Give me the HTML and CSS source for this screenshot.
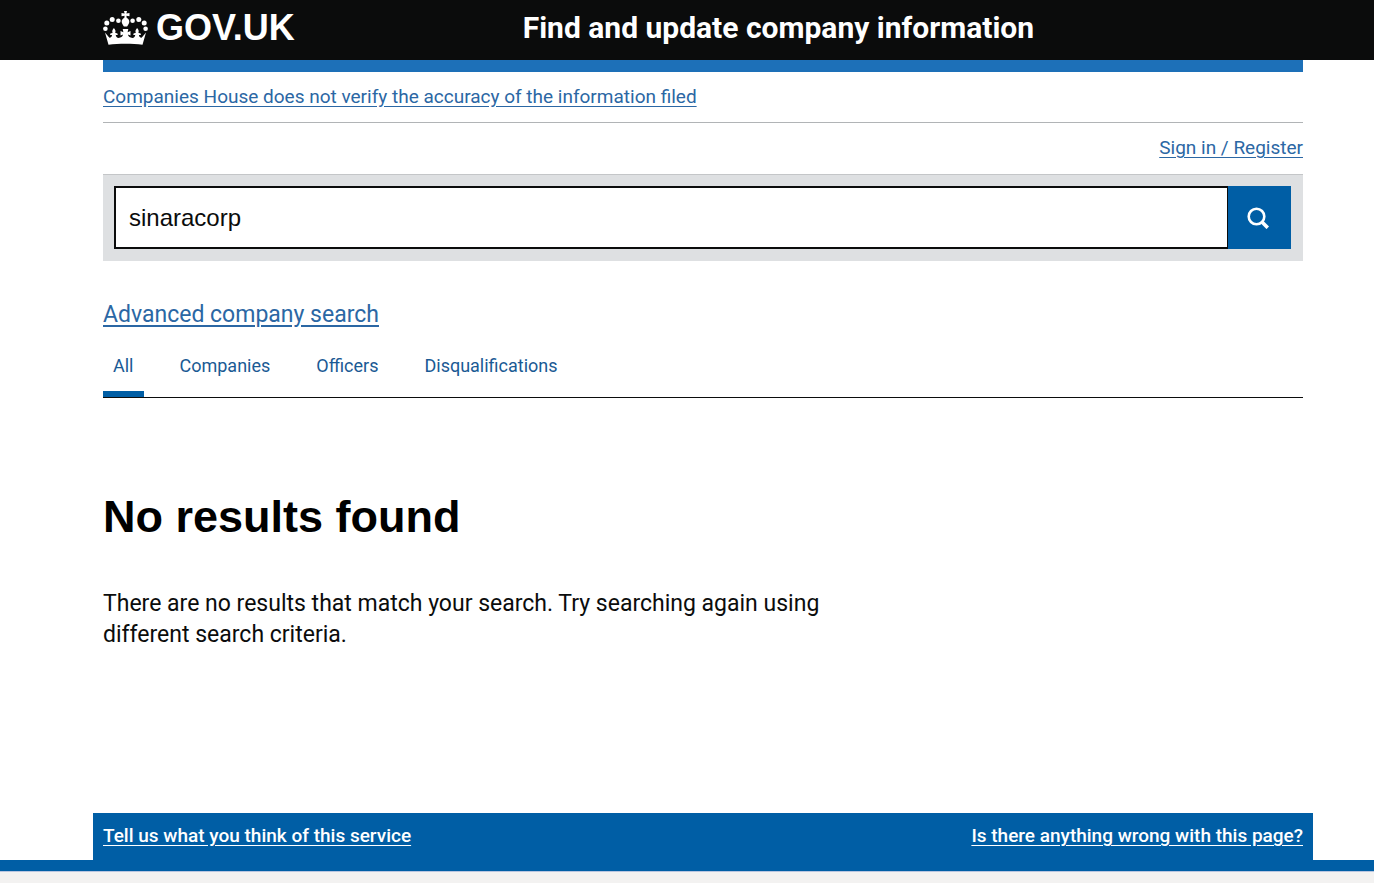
FILE: index.html
```html
<!DOCTYPE html>
<html lang="en">
<head>
    <meta charset="UTF-8">
    <meta name="viewport" content="width=device-width, initial-scale=1.0">
    <title>sinaracorp - Find and update company information - GOV.UK</title>
    <link rel="stylesheet" href="styles.css">
</head>
<body>
    <header class="header">
        <div class="container header-inner">
            <a class="logo" href="#">
                <svg class="crown" viewBox="0 0 45 34" width="45" height="34" fill="#fff" aria-hidden="true">
                    <!-- cross and centre orb -->
                    <path d="M21 0h3l-.6 2.500 3.100-.6v3.400l-3.100-.6.3 2.300c1.700.6 2.600 2 2.600 3.700 0 1.900-1.500 3.200-2.200 4.800h-3.200c-.7-1.600-2.200-2.900-2.200-4.800 0-1.700.9-3.100 2.600-3.700l.3-2.300-3.100.6v-3.400l3.100.6z"/>
                    <!-- jewels -->
                    <circle cx="15.4" cy="9.800" r="2.300"/>
                    <circle cx="9.200" cy="8.600" r="2.500"/>
                    <circle cx="3.800" cy="12" r="2.500"/>
                    <circle cx="2.400" cy="17.700" r="2.300"/>
                    <circle cx="29.600" cy="9.800" r="2.300"/>
                    <circle cx="35.800" cy="8.600" r="2.500"/>
                    <circle cx="41.200" cy="12" r="2.500"/>
                    <circle cx="42.600" cy="17.700" r="2.300"/>
                    <!-- base -->
                    <path d="M2 21.500l4.400 5.300c1.600 0 2.500-1.200 2.700-3-.9.600-1.900.3-2.200-.9.900-.8 1.900-.9 2.700-.8-.8-2-.1-3.600 1.300-5.100 1.400 1.500 2.100 3.100 1.300 5.100.8-.1 1.800 0 2.700.8-.3 1.200-1.300 1.500-2.200.9.200 2 1.200 3.100 2.900 3.100 2.300 0 4-1 4.500-3.300l-2.600 1v-4.600l2.900 1.300-.7-3.300h5.600l-.7 3.300 2.900-1.300v4.600l-2.600-1c.5 2.300 2.200 3.300 4.500 3.300 1.700 0 2.700-1.100 2.900-3.100-.9.600-1.900.3-2.200-.9.900-.8 1.900-.9 2.700-.8-.8-2-.1-3.600 1.300-5.100 1.400 1.500 2.100 3.100 1.300 5.100.8-.1 1.800 0 2.700.8-.3 1.200-1.300 1.500-2.200.9.200 1.800 1.100 3 2.700 3l4.400-5.300-3.500 12.200c-10-1.300-24-1.300-34 0z"/>
                </svg>
                <span class="logo-text">GOV.UK</span>
            </a>
            <a class="service-name" href="#">Find and update company information</a>
        </div>
    </header>

    <main class="container">
        <div class="phase-banner">
            <a class="link" href="#">Companies House does not verify the accuracy of the information filed</a>
        </div>
        <nav class="account">
            <a class="link" href="#">Sign in / Register</a>
        </nav>

        <form class="search" onsubmit="return false">
            <input class="search-input" type="text" name="q" value="sinaracorp" aria-label="Search companies and officers">
            <button class="search-button" type="submit" aria-label="Search">
                <svg viewBox="0 0 22 22" width="22" height="22" fill="none" stroke="#fff" aria-hidden="true">
                    <circle cx="9.500" cy="9.500" r="7.800" stroke-width="2.600"/>
                    <path d="M15 15l5.800 5.800" stroke-width="3.600"/>
                </svg>
            </button>
        </form>

        <p class="advanced"><a class="link" href="#">Advanced company search</a></p>

        <nav class="tabs">
            <a class="tab active" href="#">All</a>
            <a class="tab" href="#">Companies</a>
            <a class="tab" href="#">Officers</a>
            <a class="tab" href="#">Disqualifications</a>
        </nav>

        <div class="results">
            <h1>No results found</h1>
            <p>There are no results that match your search. Try searching again using different search criteria.</p>
        </div>
    </main>

    <footer class="footer">
        <div class="feedback">
            <a href="#">Tell us what you think of this service</a>
            <a href="#">Is there anything wrong with this page?</a>
        </div>
        <div class="footer-bar"></div>
    </footer>
</body>
</html>
```
FILE: styles.css
```css
* {
    box-sizing: border-box;
}

body {
    display: flex;
    flex-direction: column;
    min-height: 100vh;
    margin: 0;
    background-color: #fff;
    color: #0b0c0c;
    font-family: Roboto, "Liberation Sans", Arial, sans-serif;
    font-size: 19px;
    line-height: 24px;
}

h1,
p {
    margin: 0;
}

.header,
.footer {
    padding-left: 32px;
}

.container {
    width: 100%;
    max-width: 1200px;
    margin: 0 auto;
}

.header {
    background-color: #0b0c0c;
}

.header-inner {
    display: flex;
    align-items: center;
    gap: 228px;
    height: 60px;
    padding-bottom: 4px;
}

.header a {
    color: #fff;
    text-decoration: none;
    font-weight: bold;
}

.logo {
    display: flex;
    align-items: center;
    gap: 8px;
}

.logo-text {
    font-family: "Liberation Sans", Arial, sans-serif;
    font-size: 36px;
    line-height: 40px;
}

.service-name {
    font-size: 30px;
    line-height: 32px;
}

main.container {
    max-width: 1232px;
    padding-left: 32px;
}

.link {
    color: #2b67a4;
    text-decoration: underline;
    text-underline-offset: 3px;
}

.phase-banner {
    padding: 13px 0;
    border-top: 12px solid #1d70b8;
    border-bottom: 1px solid #b1b4b6;
}

.account {
    padding: 13px 0 14px;
    text-align: right;
}

.search {
    display: flex;
    padding: 11px 12px 12px 11px;
    border-top: 1px solid #c4c6c8;
    background-color: #dee0e2;
}

.search-input {
    flex: 1;
    min-width: 0;
    height: 63px;
    padding: 0 13px;
    border: 2px solid #0b0c0c;
    border-right-width: 1px;
    border-radius: 0;
    background-color: #fff;
    color: #0b0c0c;
    font-family: "Liberation Sans", Arial, sans-serif;
    font-size: 24px;
}

.search-button {
    display: flex;
    align-items: center;
    justify-content: center;
    width: 63px;
    padding: 0 3px 0 0;
    border: 0;
    background-color: #005ea5;
    cursor: pointer;
}

.advanced {
    padding-top: 38px;
    font-size: 23px;
    line-height: 31px;
}

.tabs {
    display: flex;
    gap: 26px;
    margin-top: 24px;
    border-bottom: 1px solid #0b0c0c;
    font-size: 18px;
}

.tab {
    padding: 0 10px 13px;
    border-bottom: 6px solid transparent;
    color: #1a5a94;
    text-decoration: none;
}

.active {
    border-bottom-color: #005ea5;
}

.results {
    max-width: 740px;
    padding: 94px 0 40px;
}

.results h1 {
    color: #000;
    font-family: "Liberation Sans", Arial, sans-serif;
    font-size: 45px;
    line-height: 50px;
}

.results p {
    margin-top: 46px;
    font-size: 23px;
    line-height: 31px;
}

.footer {
    margin-top: auto;
    padding-bottom: 11px;
    background: linear-gradient(#fff, #fff) top / 100% 47px no-repeat, #f3f2f1;
}

.feedback {
    display: flex;
    justify-content: space-between;
    max-width: 1220px;
    height: 47px;
    margin: 0 auto;
    padding: 11px 10px 0;
    background-color: #005ea5;
}

.feedback a {
    color: #fff;
    font-size: 19px;
    font-weight: 500;
    text-underline-offset: 3px;
}

.footer-bar {
    height: 12px;
    margin-left: -32px;
    border-bottom: 1px solid #b9c6e0;
    background-color: #005ea5;
}
```
